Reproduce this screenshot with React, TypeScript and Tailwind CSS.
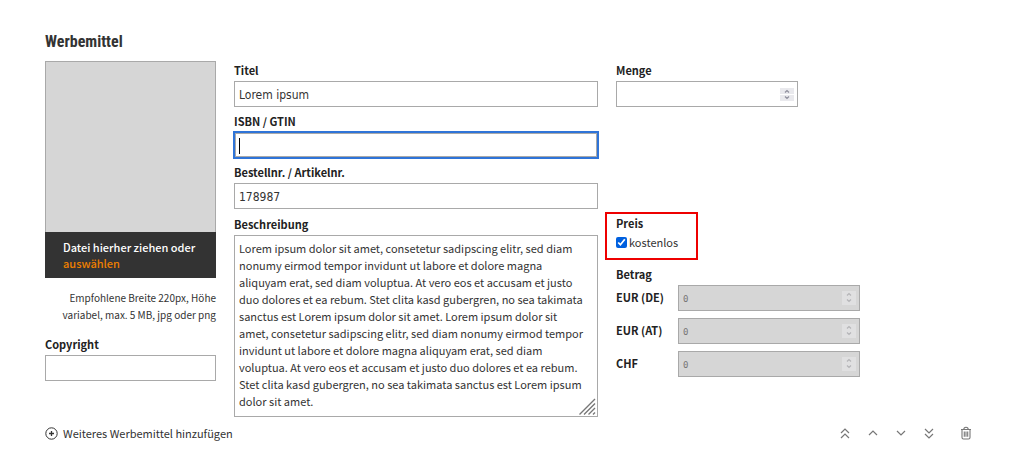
import React, { useRef, useState } from 'react';
import clsx from 'clsx';

const DESCRIPTION =
  'Lorem ipsum dolor sit amet, consetetur sadipscing elitr, sed diam nonumy eirmod tempor invidunt ut labore et dolore magna aliquyam erat, sed diam voluptua. At vero eos et accusam et justo duo dolores et ea rebum. Stet clita kasd gubergren, no sea takimata sanctus est Lorem ipsum dolor sit amet. Lorem ipsum dolor sit amet, consetetur sadipscing elitr, sed diam nonumy eirmod tempor invidunt ut labore et dolore magna aliquyam erat, sed diam voluptua. At vero eos et accusam et justo duo dolores et ea rebum. Stet clita kasd gubergren, no sea takimata sanctus est Lorem ipsum dolor sit amet.';

const PRICES = [
  { id: 'eur-de', label: 'EUR (DE)' },
  { id: 'eur-at', label: 'EUR (AT)' },
  { id: 'chf', label: 'CHF' },
];

const MOVES = [
  { label: 'Ganz nach oben', paths: ['M3 7l4-4 4 4', 'M3 12l4-4 4 4'] },
  { label: 'Nach oben', paths: ['M3 9l4-4 4 4'] },
  { label: 'Nach unten', paths: ['M3 5l4 4 4-4'] },
  { label: 'Ganz nach unten', paths: ['M3 3l4 4 4-4', 'M3 8l4 4 4-4'] },
];

const labelClass = 'block h-5 text-[11px] leading-[18px] font-bold text-[#222]';
const inputClass =
  'block h-[26px] w-full border bg-white px-1 pt-[2px] font-["DejaVu_Sans_Condensed","DejaVu_Sans",sans-serif] text-xs text-[#333] outline-none';

function TextField({ id, label, value = '', active = false }: { id: string; label: string; value?: string; active?: boolean }) {
  return (
    <div>
      <label htmlFor={id} className={labelClass}>{label}</label>
      <div className="relative">
        <input
          id={id}
          type="text"
          defaultValue={value}
          className={clsx(
            inputClass,
            active ? 'border-[#2f74d8] caret-transparent ring-1 ring-[#2f74d8] inset-ring-1 inset-ring-[#a9a9a9]' : 'border-[#a9a9a9]'
          )}
        />
        {active && <span className="absolute top-[6px] left-[5px] h-4 w-px bg-black" />}
      </div>
    </div>
  );
}

function NumberField({ id, value, disabled = false }: { id: string; value?: number; disabled?: boolean }) {
  const ref = useRef<HTMLInputElement>(null);

  return (
    <div className="relative w-[182px]">
      <input
        ref={ref}
        id={id}
        type="number"
        defaultValue={value}
        disabled={disabled}
        className={clsx(
          'block h-[26px] w-full border border-[#a9a9a9] px-1 pt-[2px] font-["DejaVu_Sans_Mono",monospace] text-[9px] outline-none [appearance:textfield] [&::-webkit-inner-spin-button]:appearance-none',
          disabled ? 'bg-[#d6d6d6] text-[#777]' : 'bg-white text-[#333]'
        )}
      />
      <div className={clsx('absolute inset-y-0 right-[4px] flex flex-col justify-center', !disabled && 'gap-px')}>
        <button
          type="button"
          aria-label="Erhöhen"
          tabIndex={-1}
          disabled={disabled}
          onClick={() => ref.current?.stepUp()}
          className={clsx('flex justify-center', disabled ? 'h-[7px] w-[14px] bg-[#e0e0e1]' : 'h-[6px] w-[14px] bg-[#e9e9ed]')}
        >
          <svg width="6" height="6" viewBox="0 0 6 6" fill="none" stroke={disabled ? '#b5b5b8' : '#8f8f9d'} strokeWidth="1.2">
            <path d="M1 4.5l2-2 2 2" />
          </svg>
        </button>
        <button
          type="button"
          aria-label="Verringern"
          tabIndex={-1}
          disabled={disabled}
          onClick={() => ref.current?.stepDown()}
          className={clsx('flex justify-center', disabled ? 'h-[7px] w-[14px] bg-[#e0e0e1]' : 'h-[6px] w-[14px] bg-[#e9e9ed]')}
        >
          <svg width="6" height="6" viewBox="0 0 6 6" fill="none" stroke={disabled ? '#b5b5b8' : '#8f8f9d'} strokeWidth="1.2">
            <path d="M1 1.5l2 2 2-2" />
          </svg>
        </button>
      </div>
    </div>
  );
}

export default function App() {
  const [free, setFree] = useState(true);

  return (
    <form className='min-h-screen bg-white pt-8 pr-[37px] pb-8 pl-[45px] font-["Noto_Sans_CJK_SC","Open_Sans",sans-serif] text-[11px] text-[#333]'>
      <h2 className='mb-[9px] font-["Liberation_Sans_Narrow","Roboto_Condensed",Roboto,sans-serif] text-base leading-5 font-bold text-[#333]'>
        Werbemittel
      </h2>

      <div className="grid grid-cols-[171fr_364fr_357fr] gap-x-[18px] gap-y-[6px]">
        {/* Bild und Copyright */}
        <div className="row-span-2">
          <div className="h-[171px] border border-b-0 border-[#a9a9a9] bg-[#d6d6d6]" />
          <div className="bg-[#333] py-[7px] pl-[18px] leading-4 font-medium text-white">
            Datei hierher ziehen oder
            <br />
            <button type="button" className="text-[#ee7f00]">auswählen</button>
          </div>
          <p className="mt-[11px] mb-3 text-right text-[10px] leading-[17px]">
            Empfohlene Breite 220px, Höhe
            <br />
            variabel, max. 5 MB, jpg oder png
          </p>
          <TextField id="copyright" label="Copyright" />
        </div>

        <div className="flex flex-col gap-[5px]">
          <TextField id="titel" label="Titel" value="Lorem ipsum" />
          <TextField id="isbn" label="ISBN / GTIN" active />
          <TextField id="bestellnr" label="Bestellnr. / Artikelnr." value="178987" />
        </div>

        <div>
          <label htmlFor="menge" className={labelClass}>Menge</label>
          <NumberField id="menge" />
        </div>

        <div>
          <label htmlFor="beschreibung" className={labelClass}>Beschreibung</label>
          <div className="relative">
            <textarea
              id="beschreibung"
              defaultValue={DESCRIPTION}
              className="block h-[182px] w-full resize-none overflow-hidden border border-[#a9a9a9] bg-white py-1 pr-[11px] pl-1 text-[11px] leading-[17px] text-[#333] outline-none"
            />
            <svg className="absolute right-[2px] bottom-[2px]" width="17" height="17" viewBox="0 0 17 17" stroke="#777" strokeWidth="1.4">
              <path d="M0.5 16.5L16 1M5 16.5L16 5.5M9.5 16.5L16 10M14 16.5L16 14.5" />
            </svg>
          </div>
        </div>

        {/* Preis */}
        <div>
          <div className="-mt-[3px] -ml-[11px] h-12 w-[93px] border-2 border-[#ee0000] pl-[9px]">
            <span className={labelClass}>Preis</span>
            <label className="flex items-center gap-[2px] leading-4">
              <input
                type="checkbox"
                checked={free}
                onChange={e => setFree(e.target.checked)}
                className="h-[11px] w-[11px] accent-[#0060df]"
              />
              kostenlos
            </label>
          </div>

          <h3 className="mt-[5px] h-5 text-[11px] leading-[18px] font-bold text-[#222]">Betrag</h3>
          <div className="flex flex-col gap-[7px]">
            {PRICES.map(p => (
              <div key={p.id} className="flex">
                <label htmlFor={p.id} className="w-[62px] leading-6 font-bold text-[#222]">{p.label}</label>
                <NumberField id={p.id} value={0} disabled={free} />
              </div>
            ))}
          </div>
        </div>
      </div>

      <div className="mt-[7px] flex items-center justify-between">
        <button type="button" className="flex items-center gap-[5px] leading-[18px]">
          <svg width="13" height="13" viewBox="0 0 13 13" fill="none" stroke="#333">
            <circle cx="6.5" cy="6.5" r="5.7" />
            <path d="M6.5 4v5M4 6.5h5" strokeWidth="1.3" />
          </svg>
          Weiteres Werbemittel hinzufügen
        </button>

        <div className="flex items-center gap-[14px]">
          {MOVES.map(m => (
            <button key={m.label} type="button" aria-label={m.label}>
              <svg width="14" height="14" viewBox="0 0 14 14" fill="none" stroke="#777" strokeWidth="1.2">
                {m.paths.map(d => <path key={d} d={d} />)}
              </svg>
            </button>
          ))}
          <button type="button" aria-label="Löschen" className="ml-[9px]">
            <svg width="14" height="14" viewBox="0 0 14 14" fill="none" stroke="#777" strokeWidth="1.1">
              <path d="M2 3.5h10M4.8 3.5c0-3 4.4-3 4.4 0M3 3.5v8q0 1.5 1.5 1.5h5q1.5 0 1.5-1.5v-8M5.3 5.5v5.3M7 5.5v5.3M8.7 5.5v5.3" />
            </svg>
          </button>
        </div>
      </div>
    </form>
  );
}
